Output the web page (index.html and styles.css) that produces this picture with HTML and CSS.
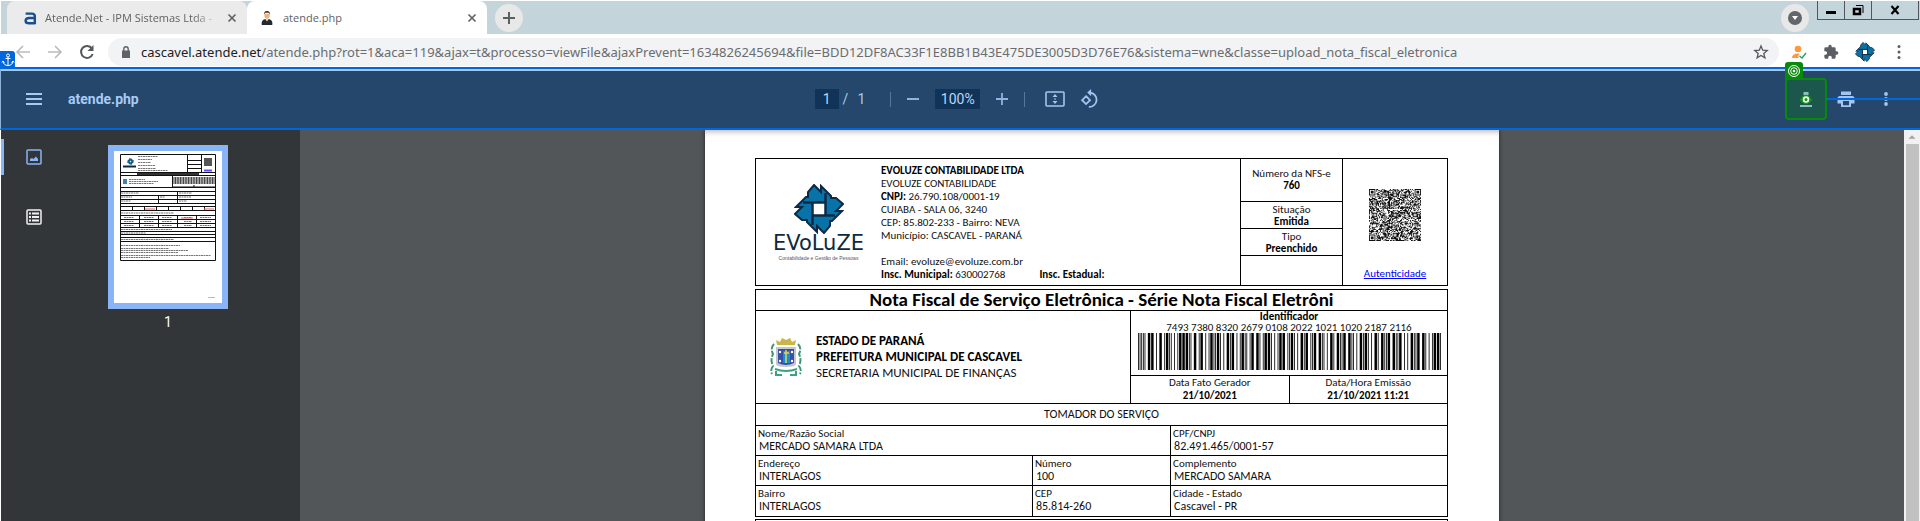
FILE: index.html
```html
<!DOCTYPE html>
<html lang="pt-BR">
<head>
<meta charset="utf-8">
<title>atende.php</title>
<link rel="stylesheet" href="styles.css">
</head>
<body>
<svg class="defs" aria-hidden="true">
  <symbol id="emblem" viewBox="0 0 50 50">
    <path d="M20 1 L27 8 V2 L37 12 V14 L42 14 L49 20 L42 27 H48 L38 37 H36 V42 L30 49 L23 42 V48 L13 38 V36 L8 36 L1 30 L8 23 H2 L12 13 H14 V8 Z" fill="#0873a8" stroke="#0d2a44" stroke-width="2"/>
    <path d="M19 19 H31 V31 H19 Z" fill="#fff"/>
    <path d="M9 18.500 H32 M31.500 9 V32 M41 31.500 H18 M18.500 41 V18" stroke="#0d2a44" stroke-width="2.500" fill="none"/>
  </symbol>
</svg>
<header class="browser">
  <div class="tabstrip">
    <div class="tab">
      <svg class="favicon" viewBox="0 0 16 16"><path d="M3 3 H10 Q13.500 3 13.500 6 V15 M13.500 8 H7 Q3 8 3 11 Q3 14 7 14 H13.500" fill="none" stroke="#194f8c" stroke-width="2.800"/></svg>
      <span class="tab-name">Atende.Net - IPM Sistemas Ltda -</span>
      <button class="close" aria-label="Fechar"><svg viewBox="0 0 10 10"><path d="M1.500 1.500 L8.500 8.500 M8.500 1.500 L1.500 8.500" stroke="#606367" stroke-width="1.700"/></svg></button>
    </div>
    <div class="tab active">
      <svg class="favicon" viewBox="0 0 16 16"><path d="M2 16 Q1 10 6 9 H10 Q15 10 14 16 Z" fill="#25282c"/><path d="M6 9 L8 12 L10 9 Z" fill="#ddd"/><path d="M5 3 H11 V6 Q10 9 8 9 Q6 9 5 6 Z" fill="#e8b583"/><path d="M5 4 Q4 0 8 0 Q12 0 11 4 L10 2 H6 Z" fill="#3b2a20"/></svg>
      <span class="tab-name">atende.php</span>
      <button class="close" aria-label="Fechar"><svg viewBox="0 0 10 10"><path d="M1.500 1.500 L8.500 8.500 M8.500 1.500 L1.500 8.500" stroke="#606367" stroke-width="1.700"/></svg></button>
    </div>
    <button class="round" aria-label="Nova guia"><svg viewBox="0 0 12 12"><path d="M6 0 V12 M0 6 H12" stroke="#5b5e62" stroke-width="2"/></svg></button>
    <button class="round search" aria-label="Pesquisar guias"><svg viewBox="0 0 14 14"><circle cx="7" cy="7" r="7" fill="#63666a"/><path d="M4 5 H10 L7 9 Z" fill="#fff"/></svg></button>
    <div class="window-controls">
      <button aria-label="Minimizar"><svg viewBox="0 0 12 12"><path d="M1 8.500 H11" stroke="#000" stroke-width="3"/></svg></button>
      <button aria-label="Restaurar"><svg viewBox="0 0 12 12"><path d="M2 5 H8 V10 H2 Z" fill="none" stroke="#000" stroke-width="2.500"/><path d="M4 1.500 H11 V9" fill="none" stroke="#000"/></svg></button>
      <button class="wide" aria-label="Fechar janela"><svg viewBox="0 0 12 12"><path d="M2.500 2 L9.500 10 M9.500 2 L2.500 10" stroke="#000" stroke-width="2.200"/></svg></button>
    </div>
  </div>
  <div class="navbar">
    <button class="nav" aria-label="Voltar"><svg class="i16" viewBox="0 0 16 16"><path d="M15 8 H2 M8 2 L2 8 L8 14" fill="none" stroke="#babcbe" stroke-width="1.700"/></svg></button>
    <button class="nav" aria-label="Avançar"><svg class="i16" viewBox="0 0 16 16"><path d="M1 8 H14 M8 2 L14 8 L8 14" fill="none" stroke="#babcbe" stroke-width="1.700"/></svg></button>
    <button class="nav" aria-label="Atualizar"><svg class="i16" viewBox="0 0 16 16"><path d="M13 4.500 A6 6 0 1 0 13.700 10" fill="none" stroke="#55585c" stroke-width="2"/><path d="M14.500 1 V7 H8.500 Z" fill="#55585c"/></svg></button>
    <div class="omnibox">
      <svg class="lock" viewBox="0 0 10 12"><path d="M1 4.500 H9 V12 H1 Z" fill="#5f6368"/><path d="M2.800 5 V3 A2.200 2.200 0 0 1 7.200 3 V5" fill="none" stroke="#5f6368" stroke-width="1.400"/></svg>
      <span class="url"><b>cascavel.atende.net</b>/atende.php?rot=1&amp;aca=119&amp;ajax=t&amp;processo=viewFile&amp;ajaxPrevent=1634826245694&amp;file=BDD12DF8AC33F1E8BB1B43E475DE3005D3D76E76&amp;sistema=wne&amp;classe=upload_nota_fiscal_eletronica</span>
      <svg class="i16" viewBox="0 0 16 16"><path d="M8 2 L9.700 6.200 L14.200 6.500 L10.800 9.400 L11.900 13.800 L8 11.400 L4.100 13.800 L5.200 9.400 L1.800 6.500 L6.300 6.200 Z" fill="none" stroke="#55585c" stroke-width="1.300"/></svg>
    </div>
    <div class="extensions">
      <svg class="i16" viewBox="0 0 16 16"><circle cx="7" cy="5" r="3.300" fill="#fb9a3c"/><path d="M1 14 Q1 9.500 7 9.500 Q8 9.500 8.500 10 L7 12 L8 14 Z" fill="#fb9a3c"/><path d="M8.500 12 L11 14 L15 9" fill="none" stroke="#27a35e" stroke-width="1.400"/></svg>
      <svg class="i16" viewBox="0 0 24 24"><path d="M20.500 11H19V7a2 2 0 0 0-2-2h-4V3.500a2.500 2.500 0 0 0-5 0V5H4a2 2 0 0 0-2 2v3.800h1.500a2.700 2.700 0 0 1 0 5.400H2V20a2 2 0 0 0 2 2h3.800v-1.500a2.700 2.700 0 0 1 5.400 0V22H17a2 2 0 0 0 2-2v-4h1.500a2.500 2.500 0 0 0 0-5z" fill="#5b5e62"/></svg>
      <svg class="i20" viewBox="0 0 50 50"><use href="#emblem"/></svg>
      <svg class="i16" viewBox="0 0 16 16"><circle cx="8" cy="2.500" r="1.500" fill="#5b5e62"/><circle cx="8" cy="8" r="1.500" fill="#5b5e62"/><circle cx="8" cy="13.500" r="1.500" fill="#5b5e62"/></svg>
    </div>
  </div>
</header>

<div class="pdfbar">
  <span class="badge-anchor"><svg viewBox="0 0 12 14"><circle cx="6" cy="2.500" r="1.500" fill="none" stroke="#fff"/><path d="M6 4 V12.500 M3.500 5.500 H8.500 M1 8 Q1.500 12.500 6 12.500 Q10.500 12.500 11 8 M0 9.500 L1 8 L2.500 9.500 M9.500 9.500 L11 8 L12 9.500" fill="none" stroke="#fff"/></svg></span>
  <div class="bar-start">
    <button class="tool" aria-label="Menu"><svg class="i16" viewBox="0 0 16 16"><path d="M0 3 H16 M0 8 H16 M0 13 H16" stroke="#a8c9f4" stroke-width="2"/></svg></button>
    <span class="file">atende.php</span>
  </div>
  <div class="bar-mid">
    <input class="page-no" aria-label="Página" value="1"><span class="of">/</span><span class="total">1</span>
    <i class="sep"></i>
    <button class="tool" aria-label="Diminuir zoom"><svg class="i12" viewBox="0 0 12 12"><path d="M0 6 H12" stroke="#90b4e0" stroke-width="2"/></svg></button>
    <input class="zoom" aria-label="Zoom" value="100%">
    <button class="tool" aria-label="Aumentar zoom"><svg class="i12" viewBox="0 0 12 12"><path d="M0 6 H12 M6 0 V12" stroke="#90b4e0" stroke-width="1.800"/></svg></button>
    <i class="sep"></i>
    <button class="tool fit" aria-label="Ajustar à página"><svg class="i20w" viewBox="0 0 20 16"><rect x="1" y="1" width="18" height="14" rx="1" fill="none" stroke="#a2c5f2" stroke-width="1.600"/><path d="M10 3 L12.500 6 H7.500 Z M10 13 L12.500 10 H7.500 Z M9.300 7.200 H10.700 V8.800 H9.300 Z" fill="#a2c5f2"/></svg></button>
    <button class="tool" aria-label="Girar"><svg class="i18" viewBox="0 0 16 16"><path d="M4.500 5.500 L8 9 L4.500 12.500 L1 9 Z M8 2.300 A6.200 6.200 0 1 1 7 15" fill="none" stroke="#a2c5f2" stroke-width="1.600"/><path d="M9 -1 V5.600 L5.500 2.300 Z" fill="#a2c5f2"/></svg></button>
  </div>
  <div class="bar-end">
    <button class="tool target" aria-label="Baixar">
      <span class="badge-target"><svg viewBox="0 0 14 14"><circle cx="7" cy="7" r="5.500" fill="none" stroke="#fff"/><circle cx="7" cy="7" r="3.300" fill="none" stroke="#fff"/><circle cx="7" cy="7" r="1.300" fill="#fff"/></svg></span>
      <svg class="i16" viewBox="0 0 16 16"><path d="M5.500 1 H10.500 V4 H5.500 Z M2 14 H14 V16 H2 Z" fill="#8fc0bd"/><path d="M1.500 9 L5 5 V12 Z M14.500 9 L11 5 V12 Z" fill="#0e9312"/><circle cx="8" cy="8.500" r="4" fill="#fff" stroke="#0e9312" stroke-width="1.500"/><circle cx="8" cy="8.500" r="1.500" fill="#0e9312"/></svg>
    </button>
    <button class="tool" aria-label="Imprimir"><svg class="i18" viewBox="0 0 18 18"><path d="M4 1.500 H14 V5 H4 Z M3 6 H15 Q17.500 6 17.500 8.500 V13.500 H14 V17 H4 V13.500 H.5 V8.500 Q.5 6 3 6 Z M6 11 V15.300 H12 V11 Z" fill="#a2c5f2" fill-rule="evenodd"/></svg></button>
    <button class="tool" aria-label="Mais ações"><svg class="i16" viewBox="0 0 16 16"><circle cx="8" cy="3" r="1.900" fill="#a2c5f2"/><circle cx="8" cy="8" r="1.900" fill="#a2c5f2"/><circle cx="8" cy="13" r="1.900" fill="#a2c5f2"/></svg></button>
    <span class="link-line"></span>
  </div>
</div>

<main class="viewer">
  <nav class="rail">
    <button class="tool on" aria-label="Miniaturas"><svg class="i16" viewBox="0 0 16 16"><rect x="1" y="1" width="14" height="14" rx="1" fill="none" stroke="#8ab4f8" stroke-width="1.500"/><path d="M4 12 V10 L6 9 L7.500 10 L10 7.500 L12 10 V12 Z" fill="#8ab4f8"/></svg></button>
    <button class="tool" aria-label="Estrutura"><svg class="i16" viewBox="0 0 16 16"><rect x="1" y="1" width="14" height="14" rx="1" fill="none" stroke="#f1f1f1" stroke-width="1.500"/><path d="M3 4.500 H5 M3 8 H5 M3 11.500 H5 M6 4.500 H13 M6 8 H13 M6 11.500 H13" stroke="#f1f1f1" stroke-width="2"/></svg></button>
  </nav>
  <aside class="thumbs">
    <svg class="thumb" id="thumb" viewBox="0 0 108 152">
      <g fill="none" stroke="#111" stroke-width="1"><path d="M6.500 3.500 H101.500 V109.500 H6.500 Z M6 21.500 H102 M6 24.500 H102 M58 36 H102 M6 36.500 H102 M6 40.500 H102 M6 44.500 H102 M6 48.500 H102 M6 52.500 H102 M6 55.500 H102 M6 59.500 H102 M6 64.500 H102 M6 68.500 H102 M6 72.500 H102 M6 76.500 H102 M6 80.500 H102 M6 83.500 H102 M6 86.500 H102 M6 90.500 H102 M73.500 3 V21 M87.500 3 V21 M74 9.500 H87 M74 13.500 H87 M74 17.500 H87 M58.500 24 V36 M80 34 V36 M63.500 40 V52 M44.500 44 V52 M18.500 56 V60 M30.500 56 V60 M42.500 56 V60 M54.500 56 V60 M66.500 56 V60 M78.500 56 V60 M90.500 56 V60 M25.500 64 V76 M44.500 64 V76 M63.500 64 V76 M82.500 64 V76"/></g>
      <g stroke="#777" stroke-width="1"><path d="M24 5.500 H44 M24 8.500 H38 M24 11.500 H37 M24 14.500 H41 M24 17.500 H42 M24 19.500 H54 M15 28.500 H31 M15 30.500 H44 M15 32.500 H40 M7 42 H25 M7 46 H18 M7 50 H17 M46 46 H51 M65 42 H78 M65 46 H77 M65 50 H73 M7 62 H60 M10 66.500 H20 M30 66.500 H40 M48 66.500 H58 M70 66.500 H78 M86 66.500 H97 M10 70.500 H20 M30 70.500 H40 M48 70.500 H58 M70 70.500 H78 M86 70.500 H97 M10 74.500 H20 M30 74.500 H40 M48 74.500 H58 M70 74.500 H78 M86 74.500 H97 M7 78.500 H58 M7 82 H32 M7 88.500 H60 M7 94.500 H66 M7 97.500 H55 M7 99.500 H74 M7 101.500 H64 M7 104.500 H97 M7 106.500 H36" stroke-dasharray="2 .5"/><path d="M23 23 H85" stroke="#333" stroke-width="2"/><path d="M94 146.500 H101" stroke="#bbb"/></g>
      <path d="M59.500 29.500 H101" stroke="#333" stroke-width="7" stroke-dasharray="1 .6"/>
      <path d="M90 7 H98 V15 H90 Z" fill="#555"/><path d="M90 19.500 H98" stroke="#55f" stroke-width="2"/>
      <path d="M31 58 H41 M90 58 H100 M67 67 H79" stroke="#e66"/>
      <use href="#emblem" x="13" y="7" width="7" height="7"/><path d="M9 15.500 H22" stroke="#0d2a44" stroke-width="2"/><path d="M9 28 H13 V33 H9 Z" fill="#4a83a0"/>
    </svg>
    <span>1</span>
  </aside>
  <section class="canvas">
    <article class="sheet">
      <div class="box issuer">
        <div class="brand">
          <svg class="brand-mark" viewBox="0 0 50 50"><use href="#emblem"/></svg>
          <div class="wordmark">EVoLuZE</div>
          <div class="tagline">Contabilidade e Gestão de Pessoas</div>
        </div>
        <div class="company">
          <b>EVOLUZE CONTABILIDADE LTDA</b>
          <span>EVOLUZE CONTABILIDADE</span>
          <span><b>CNPJ:</b> 26.790.108/0001-19</span>
          <span>CUIABA - SALA 06, 3240</span>
          <span>CEP: 85.802-233 - Bairro: NEVA</span>
          <span>Município: CASCAVEL - PARANÁ</span>
          <span class="gap">Email: evoluze@evoluze.com.br</span>
          <span class="insc"><span><b>Insc. Municipal:</b> 630002768</span><b>Insc. Estadual:</b></span>
        </div>
        <div class="status">
          <div class="tall">Número da NFS-e<b>760</b></div>
          <div>Situação<b>Emitida</b></div>
          <div>Tipo<b>Preenchido</b></div>
          <div></div>
        </div>
        <div class="auth">
          <svg class="qr" id="qr" viewBox="0 0 57 57"></svg>
          <a href="#">Autenticidade</a>
        </div>
      </div>
      <div class="box invoice">
        <h1>Nota Fiscal de Serviço Eletrônica - Série Nota Fiscal Eletrôni</h1>
        <div class="issuing">
          <div class="city">
            <svg class="arms" viewBox="0 0 32 42"><path d="M7 9 L6 4 L10 6 L12 2 L16 4 L20 2 L22 6 L26 4 L25 9 Z" fill="#c9b548"/><path d="M4 8 Q0 12 3 18 Q0 24 3 30 Q0 34 2 38 M28 8 Q32 12 29 18 Q32 24 29 30 Q32 34 30 38" fill="none" stroke="#3f9676" stroke-width="2" stroke-dasharray="6 1.500"/><path d="M6 11 H26 V28 Q26 31 16 31 Q6 31 6 28 Z" fill="#c6c6cd"/><path d="M8 13 H24 V27 Q20 29 16 29 Q12 29 8 27 Z" fill="#3550a6"/><path d="M13 15 H20 V27 H13 Z" fill="#168fd0"/><path d="M16 14 V27 M14 17 H19" stroke="#ead24e" stroke-width="1.500"/><g fill="#fff"><circle cx="10" cy="16" r="1.200"/><circle cx="22" cy="16" r="1.200"/><circle cx="10" cy="25" r="1.200"/><circle cx="22" cy="25" r="1.200"/></g><path d="M5 33 Q16 37 27 33 M6 35 V39 H12 M26 35 V39 H20" fill="none" stroke="#3aa27f" stroke-width="2"/></svg>
            <div><b>ESTADO DE PARANÁ</b><b>PREFEITURA MUNICIPAL DE CASCAVEL</b>SECRETARIA MUNICIPAL DE FINANÇAS</div>
          </div>
          <div class="ident">
            <div class="code"><b>Identificador</b><span id="code">7493 7380 8320 2679 0108 2022 1021 1020 2187 2116</span>
              <svg class="barcode" id="barcode" preserveAspectRatio="none"></svg></div>
            <div class="dates"><div>Data Fato Gerador<b>21/10/2021</b></div><div>Data/Hora Emissão<b>21/10/2021 11:21</b></div></div>
          </div>
        </div>
        <h2>TOMADOR DO SERVIÇO</h2>
        <table class="fields">
          <colgroup><col class="c40"><col class="c20"><col class="c40"></colgroup>
          <tr><td colspan="2">Nome/Razão Social<span>MERCADO SAMARA LTDA</span></td><td>CPF/CNPJ<span>82.491.465/0001-57</span></td></tr>
          <tr><td>Endereço<span>INTERLAGOS</span></td><td>Número<span>100</span></td><td>Complemento<span>MERCADO SAMARA</span></td></tr>
          <tr><td>Bairro<span>INTERLAGOS</span></td><td>CEP<span>85.814-260</span></td><td>Cidade - Estado<span>Cascavel - PR</span></td></tr>
        </table>
      </div>
      <div class="box next"></div>
    </article>
  </section>
  <div class="scroll"><svg viewBox="0 0 16 16"><path d="M8 6 L12 10 H4 Z" fill="#a3a3a3"/></svg><i></i></div>
</main>
<script src="codes.js"></script>
</body>
</html>
```
FILE: styles.css
```css
* { box-sizing: border-box; }
body { margin: 0; height: 100vh; overflow: hidden; display: flex; flex-direction: column; padding: 1px 0 0 1px; font-family: "Open Sans", "Noto Sans", sans-serif; background: #fff; }
button { border: 0; padding: 0; background: none; display: flex; align-items: center; justify-content: center; flex: none; }
svg { display: block; flex: none; overflow: visible; }
.defs { position: absolute; width: 0; height: 0; }
.i12 { width: 12px; height: 12px; }
.i16 { width: 16px; height: 16px; }
.i18 { width: 18px; height: 18px; }
.i20 { width: 20px; height: 20px; }
.i20w { width: 20px; height: 16px; }

.tabstrip { height: 33px; background: #c3d5db; display: flex; align-items: center; padding-left: 6px; }
.tab { width: 240px; height: 33px; display: flex; align-items: center; gap: 8px; padding: 0 10px 0 16px; border-radius: 8px 8px 0 0; background: #ebebeb; color: #5f6265; font-size: 11px; }
.tab.active { background: #fff; padding-left: 13px; }
.favicon { width: 14px; height: 16px; }
.tab.active .favicon { margin-right: 1px; }
.tab-name { flex: 1; white-space: nowrap; }
.tab:first-child .tab-name { mask-image: linear-gradient(90deg, #000 85%, transparent); }
.close svg { width: 10px; height: 10px; }
.round { width: 28px; height: 28px; border-radius: 50%; background: #e8e8e8; margin-left: 8px; }
.round svg { width: 12px; height: 12px; }
.round.search { margin-left: auto; margin-right: 8px; }
.round.search svg { width: 14px; height: 14px; }
.window-controls { display: flex; align-self: flex-start; border: 1px solid #50575c; border-top: 0; margin-right: 1px; }
.window-controls button { width: 27px; height: 18px; border-right: 1px solid #50575c; }
.window-controls .wide { width: 46px; border: 0; }
.window-controls svg { width: 12px; height: 12px; }

.navbar { height: 33px; display: flex; align-items: center; padding: 2px 13px 0 14px; }
.nav { width: 16px; margin-right: 16px; }
.nav + .nav + .nav { margin-right: 13px; }
.omnibox { flex: 1; height: 28px; border-radius: 14px; background: #f1f3f4; display: flex; align-items: center; padding: 0 10px 0 13px; }
.lock { width: 10px; height: 12px; margin-right: 10px; }
.url { flex: 1; font-family: "Noto Sans", "Open Sans", sans-serif; font-size: 13px; color: #6a6d70; white-space: nowrap; }
.url b { font-weight: 400; color: #202124; }
.extensions { display: flex; align-items: center; gap: 16px; padding-left: 12px; }

.pdfbar { position: relative; height: 63px; margin-left: -1px; display: flex; align-items: center; background: #24476b; border-top: 2px solid #0067df; border-bottom: 2px solid #0067df; border-left: 1px solid #8fb4dc; box-shadow: inset 0 2px #abc8ea; font-family: Roboto, sans-serif; font-size: 14px; color: #a8caf4; padding-top: 1px; }
.tool { height: 24px; }
.badge-anchor { position: absolute; left: -1px; bottom: 100%; width: 15px; height: 18px; background: #0067df; border-radius: 0 3px 0 0; display: grid; place-items: center; }
.badge-anchor svg { width: 12px; height: 14px; }
.bar-start { flex: 0 0 40%; display: flex; align-items: center; gap: 26px; padding-left: 25px; }
.file { font-weight: 700; }
.bar-mid { display: flex; align-items: center; padding-left: 46px; }
.bar-mid input { height: 20px; border: 0; padding: 0; background: #123358; color: #b9d6fa; font: inherit; text-align: center; }
.page-no { width: 24px; }
.of { margin: 0 9px 0 4px; }
.sep { width: 1px; height: 15px; background: #54779f; }
.total { margin-right: 25px; }
.bar-mid .tool { margin: 0 16px; }
.zoom { width: 45px; }
.bar-mid .fit { margin: 0 0 0 20px; }
.bar-end { margin-left: auto; position: relative; display: flex; align-items: center; padding-right: 26px; }
.target { position: relative; width: 42px; height: 42px; border: 2px solid #078a0b; border-radius: 4px; background: #1c574e; }
.target + .tool { margin: 0 23px 0 10px; }
.badge-target { position: absolute; left: -2px; bottom: 100%; width: 18px; height: 18px; background: #078a0b; border-radius: 3px 3px 0 0; display: grid; place-items: center; }
.badge-target svg { width: 14px; height: 14px; }
.link-line { position: absolute; left: 42px; right: 0; top: 20px; height: 2px; background: #0067df; }

.viewer { flex: 1; min-height: 0; display: flex; background: #525659; overflow: hidden; }
.rail { width: 66px; background: #323639; padding-top: 9px; }
.rail .tool { width: 100%; height: 36px; border-left: 3px solid transparent; margin-bottom: 24px; padding-right: 3px; }
.rail .tool.on { border-left-color: #8ab4f8; border-radius: 0 3px 3px 0; }
.thumbs { width: 233px; background: #323639; padding: 15px 0 0 41px; font: 14px Roboto, sans-serif; color: #fff; }
.thumb { width: 120px; height: 164px; background: #fff; border: 6px solid #8ab4f8; }
.thumbs span { display: block; width: 120px; text-align: center; margin-top: 5px; }
.canvas { flex: 1; min-width: 0; display: flex; justify-content: center; }
.sheet { flex: none; width: 794px; height: 1123px; background: #fff; padding: 28px 51px 0 50px; box-shadow: 0 0 4px #222, inset 0 6px 6px -5px #aaa; font: 11px/13px Carlito, Calibri, Lato, sans-serif; color: #111; }
.scroll { width: 16px; background: #f1f1f1; }
.scroll svg { width: 16px; height: 14px; }
.scroll i { display: block; width: 13px; height: 100%; margin: 0 auto; background: #c1c1c1; }

.box { border: 1px solid #000; }
.box b { color: #000; }
.issuer { height: 128px; display: flex; }
.brand { width: 125px; display: flex; flex-direction: column; align-items: center; padding-top: 25px; color: #0d2a44; }
.brand-mark { width: 50px; height: 50px; }
.wordmark { font: 21px/16px "DejaVu Sans", sans-serif; margin-top: 1px; }
.tagline { font: 5px/8px "Liberation Sans", sans-serif; margin-top: 3px; color: #556; }
.company { flex: 1; display: flex; flex-direction: column; padding-top: 5px; white-space: nowrap; }
.gap { margin-top: 13px; }
.insc { display: flex; gap: 34px; }
.status { width: 103px; border: solid #000; border-width: 0 1px; text-align: center; display: flex; flex-direction: column; }
.status div { height: 27px; border-bottom: 1px solid #000; line-height: 12px; padding-top: 2px; }
.status .tall { height: 43px; padding-top: 9px; }
.status div:last-child { border: 0; }
.status b, .dates b, .city b, .code b, .code span, .fields span { display: block; }
.auth { width: 104px; display: flex; flex-direction: column; align-items: center; padding-top: 30px; }
.auth a { color: #00f; margin-top: 26px; }
.qr { width: 52px; height: 52px; }

.invoice { margin-top: 3px; }
h1 { margin: 0; font-size: 19px; line-height: 20px; text-align: center; color: #000; border-bottom: 1px solid #000; }
.issuing { display: flex; height: 93px; border-bottom: 1px solid #000; }
.city { flex: 1; display: flex; align-items: center; gap: 14px; padding-left: 14px; font-size: 13px; line-height: 16px; }
.arms { width: 32px; height: 42px; }
.ident { width: 317px; border-left: 1px solid #000; text-align: center; display: flex; flex-direction: column; }
.code { flex: 1; line-height: 11px; border-bottom: 1px solid #000; }
.barcode { width: 303px; height: 37px; margin: 0 auto; }
.dates { display: flex; height: 27px; }
.dates div { flex: 1; }
.dates div:first-child { border-right: 1px solid #000; }
h2 { margin: 0; font-size: 12px; font-weight: 400; line-height: 21px; text-align: center; border-bottom: 1px solid #000; }
.fields { width: 100%; border-collapse: collapse; table-layout: fixed; }
.c40 { width: 40%; }
.c20 { width: 20%; }
.fields td { height: 30px; padding: 1px 2px 2px; border: 1px solid #000; }
.fields tr:first-child td { height: 29px; border-top: 0; }
.fields tr:last-child td { border-bottom: 0; }
.fields td:first-child { border-left: 0; }
.fields td:last-child { border-right: 0; }
.fields span { font-size: 12px; padding-left: 1px; }
.next { margin-top: 2px; height: 100px; }
```
FILE: codes.js
```js
const NS = "http://www.w3.org/2000/svg";
function path(svg, d, fill) {
  const p = document.createElementNS(NS, "path");
  p.setAttribute("d", d);
  p.setAttribute("fill", fill);
  svg.appendChild(p);
}

// Interleaved 2 of 5: digits are encoded in pairs, bars then spaces.
const digits = document.getElementById("code").textContent.replace(/ /g, "");
const widths = ["11331", "31113", "13113", "33111", "11313", "31311", "13311", "11133", "31131", "13131"];
let seq = "1111";
for (let i = 0; i < digits.length; i += 2) {
  for (let k = 0; k < 5; k++) seq += widths[digits[i]][k] + widths[digits[i + 1]][k];
}
seq += "311";
let x = 0, bars = "";
[...seq].forEach((w, i) => {
  if (i % 2 === 0) bars += `M${x} 0h${w}v10h-${w}z`;
  x += Number(w);
});
const barcode = document.getElementById("barcode");
barcode.setAttribute("viewBox", `0 0 ${x} 10`);
path(barcode, bars, "#000");

// Module field with finder and alignment squares.
let seed = 76;
let field = "";
const marks = [[0, 0, 7], [50, 0, 7], [0, 50, 7], [26, 4, 5], [4, 26, 5], [26, 26, 5], [48, 26, 5], [26, 48, 5], [48, 48, 5]];
for (let r = 0; r < 57; r++) {
  for (let c = 0; c < 57; c++) {
    seed = (seed * 1103515245 + 12345) % 2147483648;
    let on = (seed >> 16) % 100 < 52;
    for (const [mx, my, s] of marks) {
      if (c >= mx && c < mx + s && r >= my && r < my + s) {
        const e = Math.min(c - mx, r - my, mx + s - 1 - c, my + s - 1 - r);
        on = e !== 1;
      } else if (s === 7 && c >= mx - 1 && c <= mx + s && r >= my - 1 && r <= my + s) {
        on = false;
      }
    }
    if (on) field += `M${c} ${r}h1v1h-1z`;
  }
}
path(document.getElementById("qr"), field, "#111");
```
